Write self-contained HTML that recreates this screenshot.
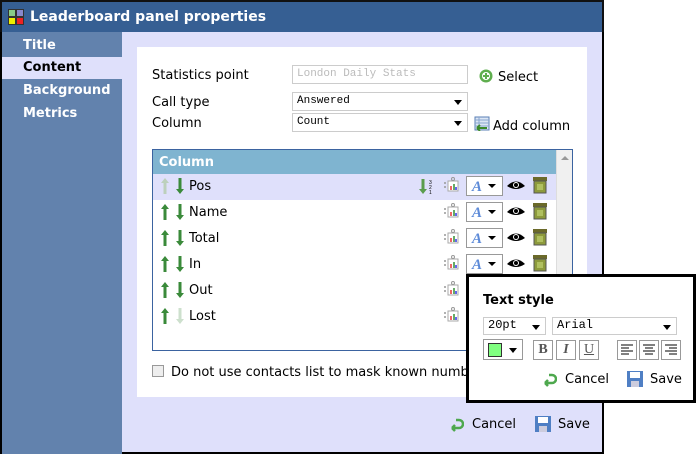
<!DOCTYPE html>
<html><head><style>
*{box-sizing:border-box;margin:0;padding:0}
body{width:696px;height:454px;background:#fff;font-family:"DejaVu Sans","Liberation Sans",sans-serif;font-size:13px;position:relative;overflow:hidden;color:#000}
.abs{position:absolute}
#win{left:0;top:0;width:604px;height:454px;border:2px solid #000;border-top:none;background:#dfe0fb}
#title{left:0;top:0;width:604px;height:32px;background:#365f93;color:#fff;font-weight:bold;font-size:14px;border:2px solid #111;border-bottom:none}
#side{left:2px;top:32px;width:120px;height:422px;background:#6282ad}
.nav{position:absolute;left:0;width:120px;height:22px;padding-left:21px;color:#fff;font-weight:bold;font-size:13px;line-height:22px}
#panel{left:137px;top:47px;width:450px;height:350px;background:#fff}
.lbl{position:absolute;font-size:13px}
.inp{position:absolute;border:1px solid #ccc;background:#fff;font-family:"Liberation Mono",monospace;font-size:11px;padding-left:4px;line-height:16px;height:19px}
.dd:after{content:"";position:absolute;right:5px;top:7px;border:4px solid transparent;border-top:5px solid #000;border-bottom:none}
#tbl{left:152px;top:149px;width:421px;height:202px;border:1px solid #3b63a0;background:#fff}
.row{position:absolute;left:0;width:403px;height:26px;font-size:13px}
.btn{position:absolute;width:20px;height:20px;border:1px solid #999;background:#fff;text-align:center;font-family:"Liberation Serif",serif;font-weight:bold;font-size:14px;line-height:18px;color:#555}
</style></head><body>
<div id="win" class="abs"></div>
<div id="title" class="abs">
 <svg class="abs" style="left:6px;top:7px" width="16" height="16"><rect width="16" height="16" fill="#333"/><rect x="1" y="1" width="6" height="6" fill="#8c8"/><rect x="9" y="1" width="6" height="6" fill="#88c"/><rect x="1" y="9" width="6" height="6" fill="#ee0"/><rect x="9" y="9" width="6" height="6" fill="#e22"/></svg>
 <span class="abs" style="left:28px;top:7px">Leaderboard panel properties</span>
</div>
<div id="side" class="abs">
 <div class="nav" style="top:3px">Title</div>
 <div class="nav" style="top:25px;background:#dfe0fb;color:#000">Content</div>
 <div class="nav" style="top:48px">Background</div>
 <div class="nav" style="top:71px">Metrics</div>
</div>
<div id="panel" class="abs"></div>
<div class="lbl" style="left:152px;top:68px">Statistics point</div>
<div class="lbl" style="left:152px;top:95px">Call type</div>
<div class="lbl" style="left:152px;top:116px">Column</div>
<div class="inp" style="left:292px;top:65px;width:176px;color:#bbb">London Daily Stats</div>
<div class="inp dd" style="left:292px;top:92px;width:176px">Answered</div>
<div class="inp dd" style="left:292px;top:113px;width:176px">Count</div>
<svg class="abs" style="left:479px;top:69px" width="14" height="14"><circle cx="7" cy="7" r="6.5" fill="#5fae4e"/><circle cx="7" cy="7" r="4" fill="#fff"/><path d="M7 4v6M4 7h6" stroke="#5fae4e" stroke-width="2"/></svg>
<div class="lbl" style="left:498px;top:70px">Select</div>
<svg class="abs" style="left:474px;top:116px" width="16" height="15"><rect x="1" y="1" width="14" height="13" fill="#dbe6f5" stroke="#5a7fb5"/><path d="M1 4h14M1 7h14M1 10h14M5 1v13" stroke="#8aa6d0"/><path d="M3 12h10M3 12l3-3M3 12l3 3" stroke="#3b8a2a" stroke-width="2"/></svg>
<div class="lbl" style="left:493px;top:119px">Add column</div>
<div id="tbl" class="abs">
 <div class="abs" style="left:0;top:0;width:403px;height:24px;background:#7fb4d0;color:#fff;font-weight:bold;padding:5px 6px;font-size:13px">Column</div>
 <div class="abs" style="left:403px;top:0;width:16px;height:200px;background:#f0f0f0;border-left:1px solid #ddd"><div style="margin:6px 0 0 4px;border:4px solid transparent;border-bottom:4px solid #999;border-top:none;width:0"></div></div>
 <div class="row" style="top:24px;background:#dfe0fb">
  <div class="abs" style="left:36px;top:5px">Pos</div>
  <svg class="abs" style="left:265px;top:4px" width="16" height="18"><path d="M5 1v12" stroke="#5b9d4e" stroke-width="3"/><path d="M1 11l4 5 4-5z" fill="#5b9d4e"/><text x="11" y="6" font-size="5" font-family="Liberation Sans">3</text><text x="11" y="11" font-size="5" font-family="Liberation Sans">2</text><text x="11" y="16" font-size="5" font-family="Liberation Sans">1</text></svg>
 </div>
 <div class="row" style="top:50px"><div class="abs" style="left:36px;top:5px">Name</div></div>
 <div class="row" style="top:76px"><div class="abs" style="left:36px;top:5px">Total</div></div>
 <div class="row" style="top:102px"><div class="abs" style="left:36px;top:5px">In</div></div>
 <div class="row" style="top:128px"><div class="abs" style="left:36px;top:5px">Out</div></div>
 <div class="row" style="top:154px"><div class="abs" style="left:36px;top:5px">Lost</div></div>
</div>
<svg class="abs" style="left:152px;top:173px" width="420" height="160">
 <defs>
  <g id="u"><path d="M4 4v13" stroke-width="3"/><path d="M0 6l4-5 4 5z" stroke="none"/></g>
  <g id="d"><path d="M4 1v13" stroke-width="3"/><path d="M0 12l4 5 4-5z" stroke="none"/></g>
  <g id="c"><rect x="5" y="4" width="10" height="10" fill="#fff" stroke="#aaa"/><rect x="7" y="9" width="2" height="4" fill="#e66"/><rect x="10" y="7" width="2" height="6" fill="#6a6"/><rect x="12" y="10" width="2" height="3" fill="#66e"/><circle cx="2" cy="6" r="1" fill="#999"/><circle cx="2" cy="10" r="1" fill="#999"/><circle cx="10" cy="2" r="1.5" fill="none" stroke="#999"/></g>
  <g id="s"><rect x=".5" y=".5" width="36" height="19" fill="#fff" stroke="#999"/><text x="6" y="15" font-family="Liberation Serif" font-style="italic" font-weight="bold" font-size="15" fill="#5c8ad8">A</text><path d="M22 8h8l-4 4z" fill="#000"/></g>
  <g id="e"><path d="M0 8Q9 -1 18 8Q9 14 0 8z" fill="#000"/><circle cx="9" cy="7" r="3" fill="#fff"/><circle cx="9" cy="7" r="2" fill="#000"/></g>
  <g id="t"><rect x="1" y="0" width="14" height="4" fill="#6b6a2a"/><rect x="2" y="4" width="12" height="12" fill="#8d9a3c" stroke="#555"/><rect x="5" y="7" width="6" height="6" fill="#b0c060"/></g>
 </defs>
 <g fill="#bcd0bc" stroke="#bcd0bc"><use href="#u" x="9" y="4"/></g>
 <g fill="#3a8a3a" stroke="#3a8a3a">
  <use href="#d" x="24" y="4"/>
  <use href="#u" x="9" y="30"/><use href="#d" x="24" y="30"/>
  <use href="#u" x="9" y="56"/><use href="#d" x="24" y="56"/>
  <use href="#u" x="9" y="82"/><use href="#d" x="24" y="82"/>
  <use href="#u" x="9" y="108"/><use href="#d" x="24" y="108"/>
  <use href="#u" x="9" y="134"/>
 </g>
 <g fill="#cde0cd" stroke="#cde0cd"><use href="#d" x="24" y="134"/></g>
 <use href="#c" x="291" y="4"/><use href="#c" x="291" y="30"/><use href="#c" x="291" y="56"/><use href="#c" x="291" y="82"/><use href="#c" x="291" y="108"/><use href="#c" x="291" y="134"/>
 <use href="#s" x="314" y="3"/><use href="#s" x="314" y="29"/><use href="#s" x="314" y="55"/><use href="#s" x="314" y="81"/>
 <use href="#e" x="355" y="5"/><use href="#e" x="355" y="31"/><use href="#e" x="355" y="57"/><use href="#e" x="355" y="83"/>
 <use href="#t" x="380" y="4"/><use href="#t" x="380" y="30"/><use href="#t" x="380" y="56"/><use href="#t" x="380" y="82"/>
</svg>
<div class="abs" style="left:152px;top:365px;width:12px;height:12px;border:1px solid #999;background:#eee"></div>
<div class="lbl" style="left:171px;top:365px">Do not use contacts list to mask known numbers</div>
<svg class="abs" style="left:450px;top:418px" width="14" height="14"><path d="M6 2h3a4 4 0 0 1 0 8H2M2 10l3-3M2 10l3 3" fill="none" stroke="#4ea84e" stroke-width="2.5"/></svg>
<div class="lbl" style="left:472px;top:417px">Cancel</div>
<svg class="abs" style="left:535px;top:416px" width="16" height="16"><rect width="16" height="16" fill="#4f7fc4"/><rect x="3" y="1" width="10" height="6" fill="#fff"/><rect x="4" y="10" width="8" height="6" fill="#ccd"/></svg>
<div class="lbl" style="left:558px;top:417px">Save</div>
<div class="abs" style="left:466px;top:274px;width:230px;height:129px;border:3px solid #000;background:#fff">
 <div class="abs" style="left:14px;top:16px;font-weight:bold;font-size:13px">Text style</div>
 <div class="inp dd" style="left:14px;top:40px;width:63px;height:18px;font-size:12px;line-height:15px">20pt</div>
 <div class="inp dd" style="left:83px;top:40px;width:125px;height:18px;font-size:12px;line-height:15px">Arial</div>
 <div class="abs" style="left:14px;top:62px;width:40px;height:21px;border:1px solid #999"><div style="position:absolute;left:4px;top:3px;width:14px;height:14px;background:#80ff80;border:1px solid #333"></div><div style="position:absolute;left:25px;top:8px;border:4px solid transparent;border-top:5px solid #000;border-bottom:none"></div></div>
 <div class="btn" style="left:64px;top:63px">B</div>
 <div class="btn" style="left:87px;top:63px;font-style:italic">I</div>
 <div class="btn" style="left:110px;top:63px;text-decoration:underline;font-weight:normal">U</div>
 <svg class="abs" style="left:148px;top:63px" width="64" height="20">
  <rect x=".5" y=".5" width="19" height="19" fill="#fff" stroke="#999"/><rect x="22.5" y=".5" width="19" height="19" fill="#fff" stroke="#999"/><rect x="44.5" y=".5" width="19" height="19" fill="#fff" stroke="#999"/>
  <path d="M4 5h12M4 8h8M4 11h12M4 14h8M26 5h12M28 8h8M26 11h12M28 14h8M48 5h12M52 8h8M48 11h12M52 14h8" stroke="#000"/>
 </svg>
 <svg class="abs" style="left:74px;top:96px" width="14" height="14"><path d="M6 2h3a4 4 0 0 1 0 8H2M2 10l3-3M2 10l3 3" fill="none" stroke="#4ea84e" stroke-width="2.5"/></svg>
 <div class="lbl" style="left:96px;top:95px">Cancel</div>
 <svg class="abs" style="left:158px;top:94px" width="16" height="16"><rect width="16" height="16" fill="#4f7fc4"/><rect x="3" y="1" width="10" height="6" fill="#fff"/><rect x="4" y="10" width="8" height="6" fill="#ccd"/></svg>
 <div class="lbl" style="left:181px;top:95px">Save</div>
</div>
</body></html>
